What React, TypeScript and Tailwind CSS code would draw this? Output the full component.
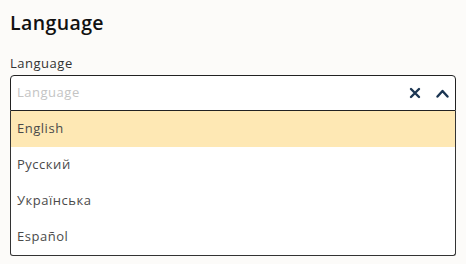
const OPTIONS = ["English", "Русский", "Українська", "Español"];

function ClearIcon() {
  return (
    <svg width="12" height="12" viewBox="0 0 12 12" fill="none" stroke="#1b3552" strokeWidth="2.4" strokeLinecap="round">
      <path d="M2 2 L10 10 M10 2 L2 10" />
    </svg>
  );
}

function ChevronUp() {
  return (
    <svg width="13" height="9" viewBox="0 0 13 9" fill="none" stroke="#1b3552" strokeWidth="2.4" strokeLinecap="round" strokeLinejoin="round">
      <path d="M1.5 7.5 L6.5 2 L11.5 7.5" />
    </svg>
  );
}

export default function App() {
  return (
    <div
      className="h-[264px] w-[466px] bg-[#fcfbf9] px-[10px] pt-[10px]"
      style={{ fontFamily: '"Open Sans", "Liberation Sans", sans-serif' }}
    >
      <h1 className="text-[19.5px] font-semibold leading-[26px] tracking-[0.02em] text-[#111]">Language</h1>
      <div className="mt-[18px] text-[13px] leading-[18px] tracking-[0.04em] text-[#333]">Language</div>
      <div className="mt-[3px] flex h-[36px] items-center rounded-t-[4px] border border-[#222] bg-white pl-[6px] pr-[6px]">
        <span className="flex-1 text-[13px] tracking-[0.04em] text-[#c4c4c4]">Language</span>
        <div className="flex items-center gap-[15px]">
          <ClearIcon />
          <ChevronUp />
        </div>
      </div>
      <div className="rounded-b-[3px] border-x border-b border-[#333] bg-white">
        {OPTIONS.map((o, i) => (
          <div
            key={o}
            className={`flex h-[36px] items-center px-[6px] text-[13px] tracking-[0.04em] text-[#4a4a4a] ${i === 0 ? "bg-[#fee8b4]" : ""}`}
          >
            {o}
          </div>
        ))}
      </div>
    </div>
  );
}
